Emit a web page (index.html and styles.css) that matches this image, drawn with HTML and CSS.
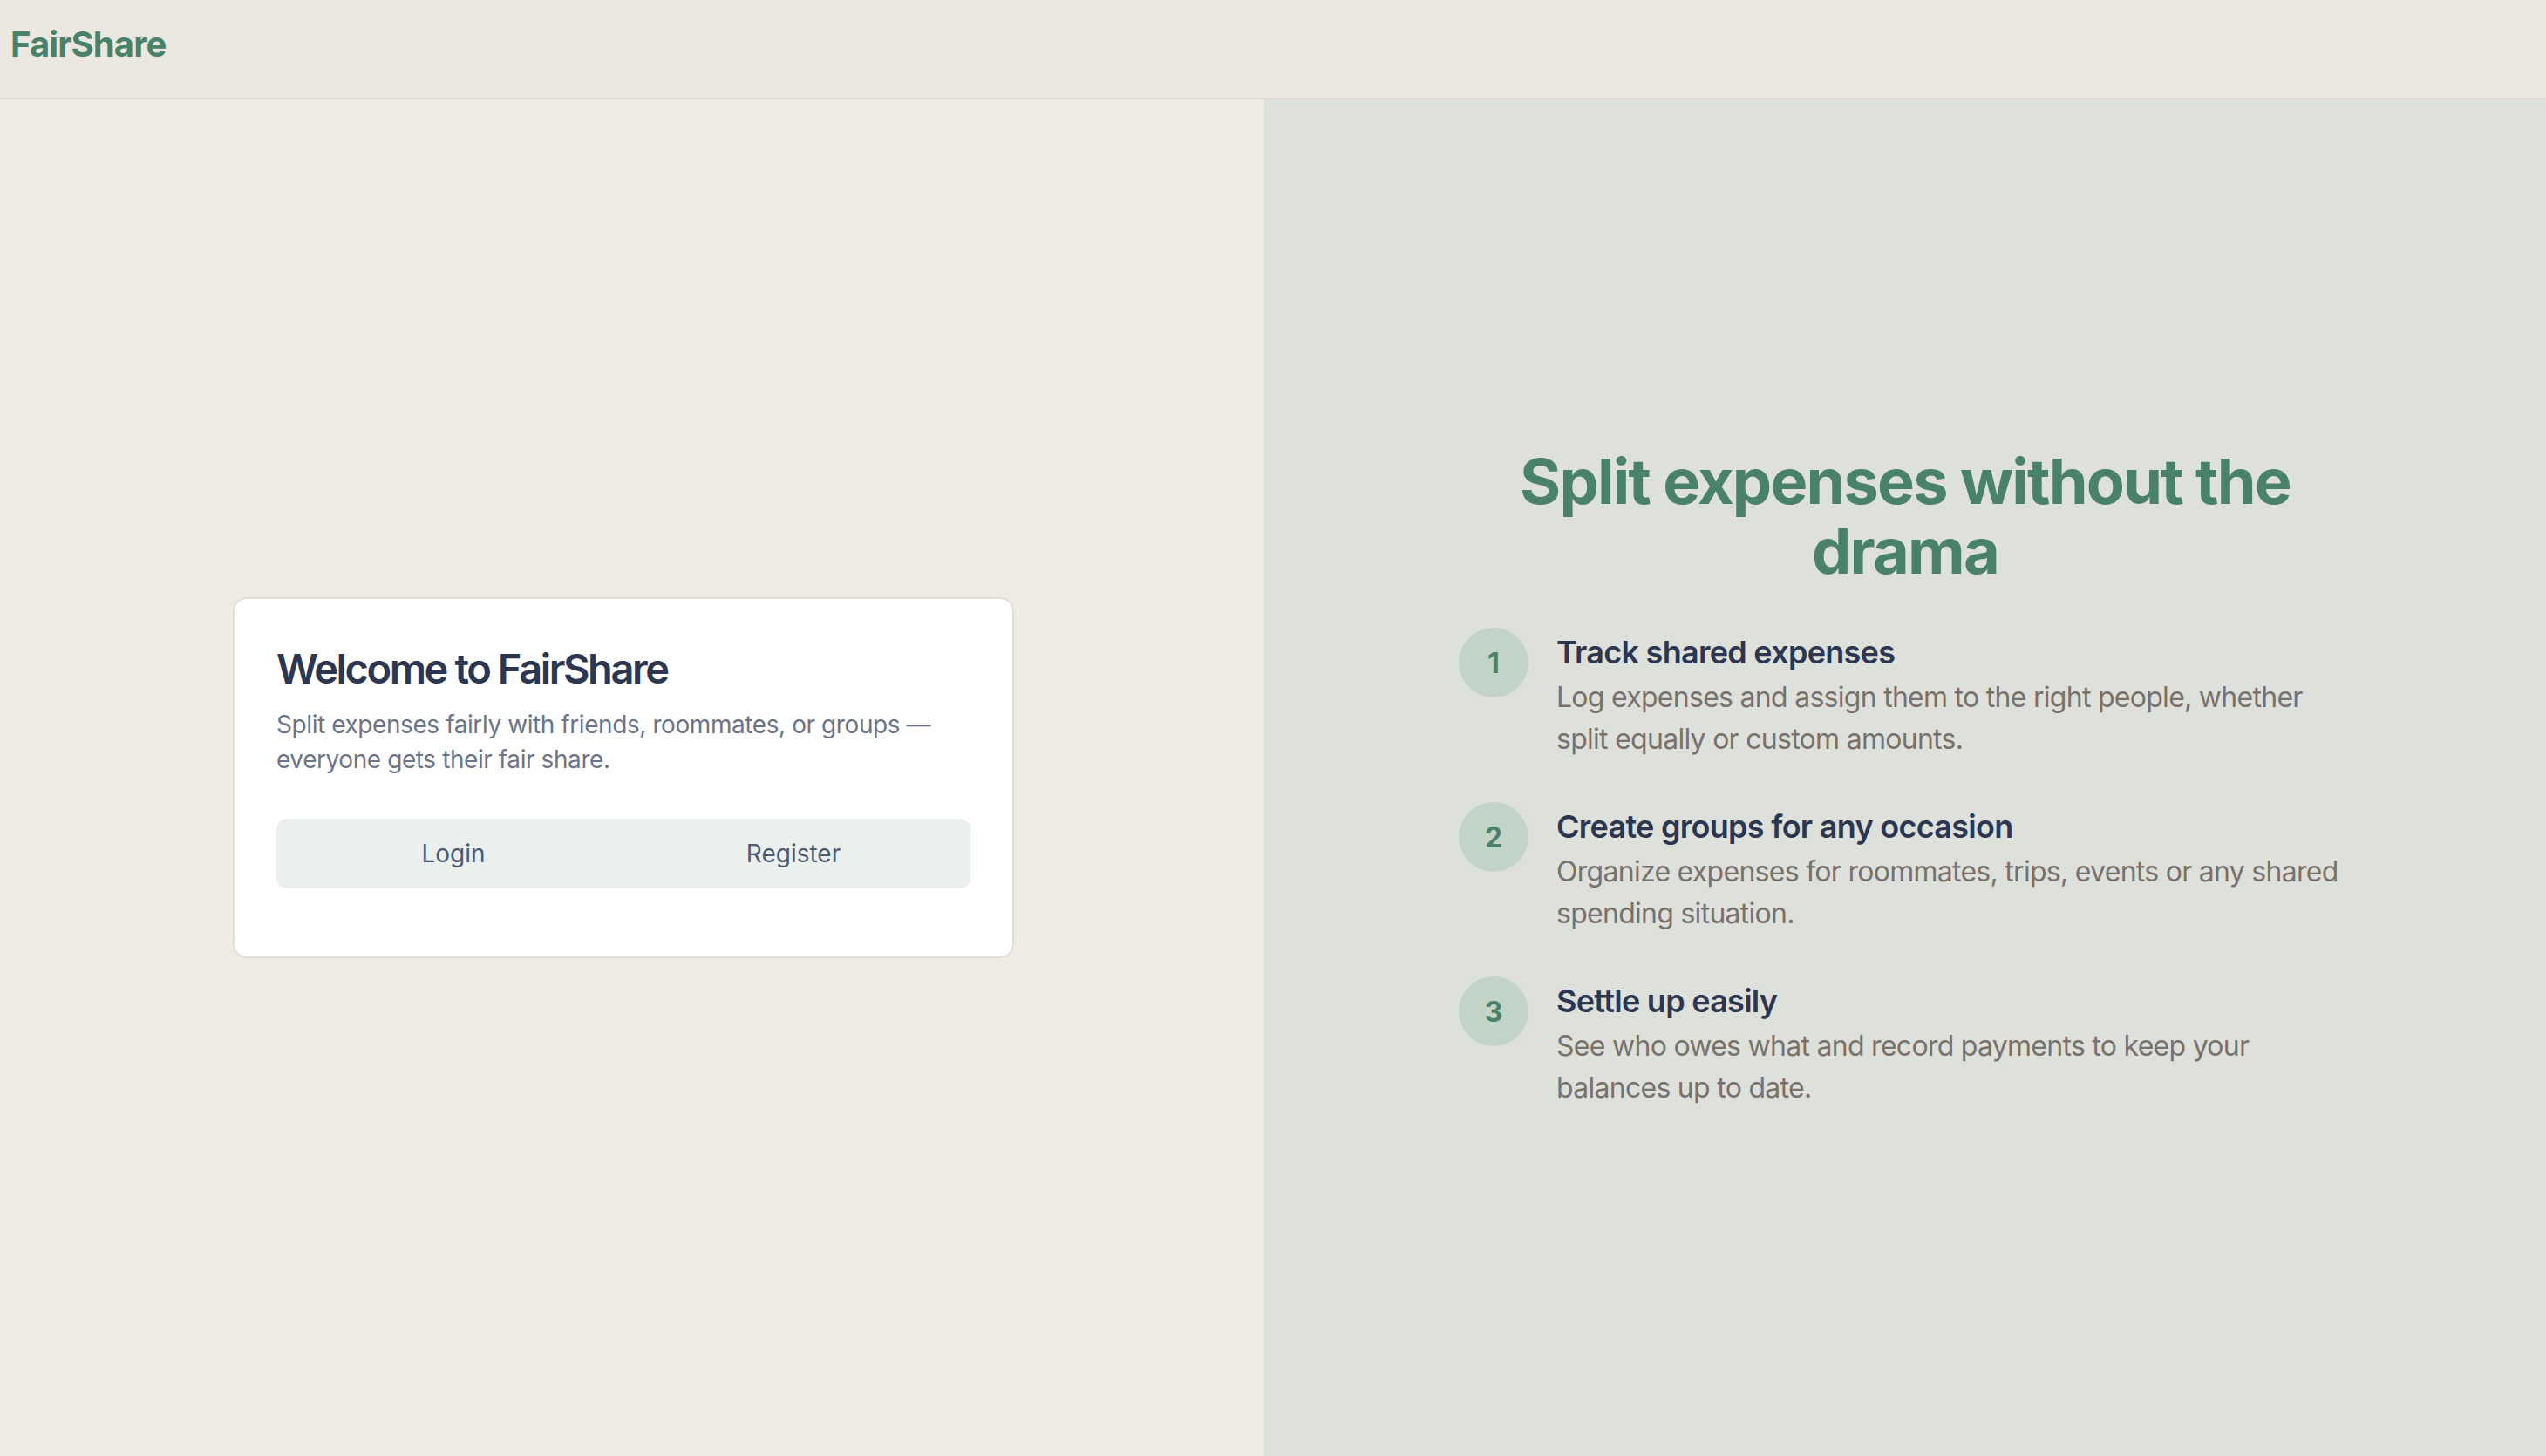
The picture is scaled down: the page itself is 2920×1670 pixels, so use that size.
FILE: index.html
```html
<!DOCTYPE html>
<html lang="en">
<head>
<meta charset="utf-8">
<title>FairShare</title>
<link rel="stylesheet" href="styles.css">
</head>
<body>
<header class="topbar">
  <span class="brand">FairShare</span>
</header>
<main class="split">
  <section class="pane-left">
    <div class="card">
      <h1 class="card-title">Welcome to FairShare</h1>
      <p class="card-sub">Split expenses fairly with friends, roommates, or groups — everyone gets their fair share.</p>
      <div class="tabs">
        <button class="tab">Login</button>
        <button class="tab">Register</button>
      </div>
      <div class="tab-panel"></div>
    </div>
  </section>
  <section class="pane-right">
    <div class="intro">
      <h2 class="hero">Split expenses without the drama</h2>
      <ul class="steps">
        <li class="step">
          <span class="num">1</span>
          <div class="step-body">
            <h3 class="step-title">Track shared expenses</h3>
            <p class="step-desc">Log expenses and assign them to the right people, whether split equally or custom amounts.</p>
          </div>
        </li>
        <li class="step">
          <span class="num">2</span>
          <div class="step-body">
            <h3 class="step-title">Create groups for any occasion</h3>
            <p class="step-desc">Organize expenses for roommates, trips, events or any shared spending situation.</p>
          </div>
        </li>
        <li class="step">
          <span class="num">3</span>
          <div class="step-body">
            <h3 class="step-title">Settle up easily</h3>
            <p class="step-desc">See who owes what and record payments to keep your balances up to date.</p>
          </div>
        </li>
      </ul>
    </div>
  </section>
</main>
</body>
</html>
```

FILE: styles.css
```css
* { box-sizing: border-box; }
html, body { margin: 0; padding: 0; height: 100%; }
body {
  font-family: Inter, "Noto Sans", "Liberation Sans", sans-serif;
  background: #eeebe5;
  display: flex;
  flex-direction: column;
  min-height: 1670px;
}
.topbar {
  height: 114px;
  background: #ebe8e2;
  border-bottom: 2px solid #dfdbd2;
  padding: 23px 12px 0;
  flex: none;
}
.brand {
  font-size: 40px;
  line-height: 56px;
  font-weight: 700;
  color: #4a8269;
  letter-spacing: -0.9px;
}
.split {
  flex: 1;
  display: flex;
}
.pane-left {
  width: 1450px;
  background: #eeebe5;
  display: flex;
  align-items: center;
  justify-content: center;
  padding-right: 20px;
}
.pane-right {
  flex: 1;
  background: #dee1db;
  display: flex;
  align-items: center;
  justify-content: center;
}
.card {
  width: 896px;
  background: #ffffff;
  border: 2px solid #e2dfd8;
  border-radius: 16px;
  padding: 48px 48px 48px;
}
.card-title {
  margin: 0;
  font-size: 47px;
  line-height: 64px;
  font-weight: 600;
  letter-spacing: -2.4px;
  color: #2d3650;
}
.card-sub {
  margin: 12px 0 0;
  font-size: 28px;
  line-height: 40px;
  letter-spacing: -0.42px;
  color: #6b7489;
}
.tabs {
  margin-top: 48px;
  background: #ebf0ee;
  border-radius: 12px;
  padding: 8px;
  display: grid;
  grid-template-columns: 1fr 1fr;
}
.tab {
  height: 64px;
  border: 0;
  background: transparent;
  font-family: inherit;
  font-size: 28px;
  color: #4f5a6e;
  border-radius: 8px;
}
.tab-panel { height: 30px; }
.intro {
  width: 1024px;
}
.hero {
  margin: 0 0 48px;
  text-align: center;
  font-size: 72px;
  line-height: 80px;
  font-weight: 700;
  letter-spacing: -1.8px;
  color: #4a8269;
}
.steps {
  list-style: none;
  margin: 0;
  padding: 0;
  display: flex;
  flex-direction: column;
  gap: 48px;
}
.step {
  display: flex;
  gap: 32px;
}
.num {
  flex: none;
  width: 80px;
  height: 80px;
  border-radius: 50%;
  background: #c2d3c8;
  color: #4a8269;
  font-size: 32px;
  font-weight: 700;
  display: flex;
  align-items: center;
  justify-content: center;
}
.step-title {
  margin: 0;
  font-size: 36px;
  line-height: 56px;
  font-weight: 600;
  color: #2d3650;
  letter-spacing: -0.72px;
}
.step-desc {
  margin: 0;
  font-size: 32px;
  line-height: 48px;
  letter-spacing: -0.72px;
  color: #78716c;
}
```
